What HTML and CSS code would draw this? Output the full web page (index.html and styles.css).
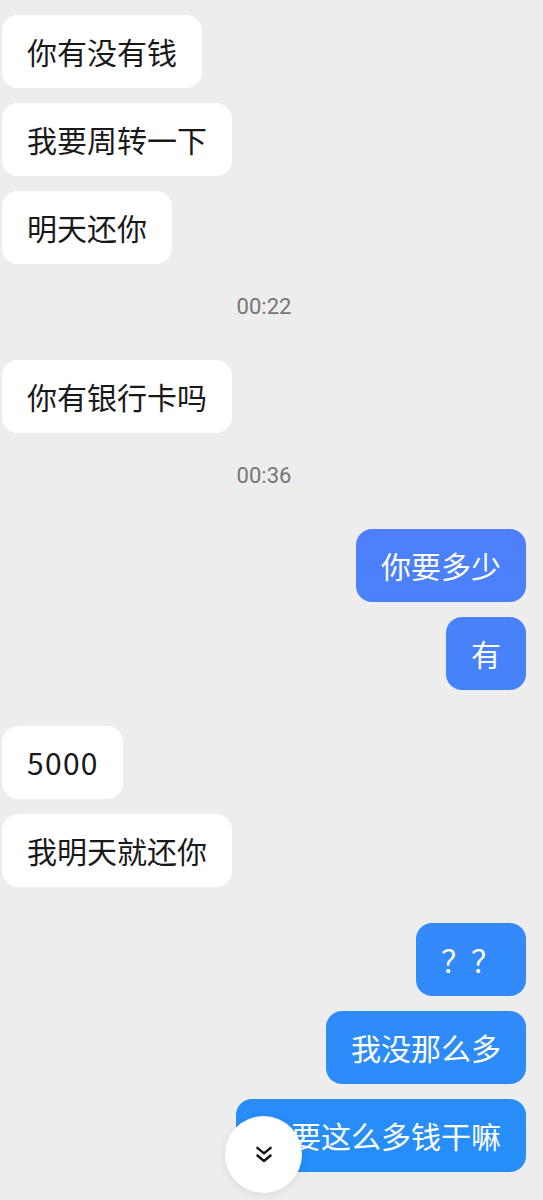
FILE: index.html
```html
<!DOCTYPE html>
<html lang="zh-CN">
<head>
  <meta charset="UTF-8" />
  <meta name="viewport" content="width=device-width, initial-scale=1.0"/>
  <title>聊天</title>
  <link rel="stylesheet" href="styles.css">
</head>
<body>
  <div class="chat">
    <div class="msg">你有没有钱</div>
    <div class="msg">我要周转一下</div>
    <div class="msg">明天还你</div>
    <div class="time">00:22</div>
    <div class="msg">你有银行卡吗</div>
    <div class="time">00:36</div>
    <div class="msg me">你要多少</div>
    <div class="msg me">有</div>
    <div class="msg turn num">5000</div>
    <div class="msg">我明天就还你</div>
    <div class="msg me turn">？？</div>
    <div class="msg me">我没那么多</div>
    <div class="msg me">你要这么多钱干嘛</div>
  </div>

  <button class="to-bottom" aria-label="回到底部">
    <svg width="22" height="22" viewBox="0 0 20 20" fill="none" stroke="#111" stroke-width="2.2" stroke-linecap="round" stroke-linejoin="round">
      <path d="M4 3.5 L10 8.5 L16 3.5"/>
      <path d="M4 10.5 L10 15.5 L16 10.5"/>
    </svg>
  </button>
</body>
</html>
```

FILE: styles.css
```css
:root {
  --bg: #ededed;
  --bubble: #ffffff;
  --text: #191919;
  --muted: #767676;
}
* { box-sizing: border-box; }
html, body { height: 100%; }
body {
  margin: 0;
  background: var(--bg);
  font-family: "Noto Sans CJK SC", "Noto Sans", sans-serif;
  color: var(--text);
  overflow: hidden;
}
.chat {
  display: flex; flex-direction: column; gap: 15px;
  padding: 15px 17px 0 2px;
}
.msg {
  align-self: flex-start;
  background: var(--bubble);
  border-radius: 16px;
  padding: 15px 25px;
  font-size: 30px; line-height: 43px;
  white-space: nowrap;
}
.msg.num { letter-spacing: 1.3px; padding-right: 24px; }
.msg.me {
  align-self: flex-end;
  color: #fff;
  background: linear-gradient(180deg, #7173fc 0%, #238ff9 100%) fixed;
}
.msg.turn { margin-top: 21px; }
.time {
  text-align: center;
  padding: 17px 0 27px;
  font-family: Roboto, "Noto Sans", sans-serif;
  font-size: 22px; line-height: 22px;
  color: var(--muted);
}
.to-bottom {
  position: fixed; left: 225px; top: 1116px;
  width: 77px; height: 77px;
  border: none; border-radius: 50%;
  background: #fff;
  box-shadow: 0 2px 8px rgba(0,0,0,0.08);
  display: flex; align-items: center; justify-content: center;
  padding: 0;
}
```
